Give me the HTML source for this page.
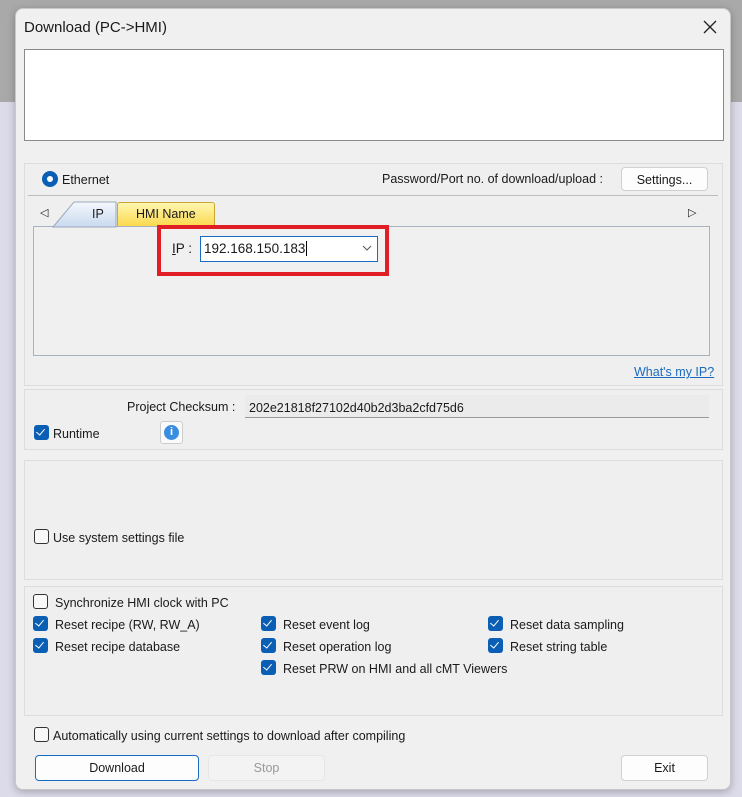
<!DOCTYPE html>
<html><head><meta charset="utf-8"><style>
*{box-sizing:border-box;margin:0;padding:0}
body{width:742px;height:797px;position:relative;overflow:hidden;font-family:"Liberation Sans",sans-serif;font-size:12.5px;color:#1a1a1a;background:#dcdbe9}
.a{position:absolute}
.top{left:0;top:0;width:742px;height:102px;background:#a9a9a9}
.dlg{left:15px;top:8px;width:716px;height:782px;background:#f0f0f0;border-radius:8px;border:1px solid #c8c8c8;box-shadow:0 2px 8px rgba(0,0,0,.25)}
.grp{border:1px solid #dcdcdc;background:#efefef}
.cb{width:15px;height:15px;border-radius:3px;background:#0a5fb4}
.cb::after{content:"";position:absolute;left:4px;top:2px;width:4px;height:7px;border:solid #fff;border-width:0 1.5px 1.5px 0;transform:rotate(40deg)}
.ub{width:15px;height:15px;border-radius:3px;border:1px solid #333;background:#f8f8f8}
.btn{background:#fdfdfd;border:1px solid #d0d0d0;border-radius:4px;text-align:center;line-height:24px}
.t{white-space:nowrap}
</style></head><body>
<div class="a top"></div>
<div class="a dlg"></div>
<div class="a t" style="left:24px;top:19px;font-size:15px">Download (PC-&gt;HMI)</div>
<svg class="a" style="left:703px;top:20px" width="14" height="14"><path d="M1 1L13 13M13 1L1 13" stroke="#222" stroke-width="1.3"/></svg>
<div class="a" style="left:24px;top:49px;width:700px;height:92px;background:#fff;border:1px solid #8a8a8a"></div>

<div class="a grp" style="left:24px;top:163px;width:699px;height:223px"></div>
<div class="a" style="left:42px;top:171px;width:16px;height:16px;border-radius:50%;background:#0a5fb4"></div>
<div class="a" style="left:47px;top:176px;width:6px;height:6px;border-radius:50%;background:#fff"></div>
<div class="a t" style="left:62px;top:173px">Ethernet</div>
<div class="a t" style="left:382px;top:172px">Password/Port no. of download/upload :</div>
<div class="a btn" style="left:621px;top:167px;width:87px;height:24px">Settings...</div>
<div class="a" style="left:28px;top:195px;width:690px;height:1px;background:#bcbcbc"></div>
<div class="a t" style="left:40px;top:206px;font-size:11px">◁</div>
<div class="a t" style="left:688px;top:206px;font-size:11px">▷</div>
<div class="a" style="left:33px;top:226px;width:677px;height:130px;border:1px solid #a8b2c0;background:#f0f0f0"></div>
<svg class="a" style="left:52px;top:201px" width="66" height="27"><defs><linearGradient id="g" x1="0" y1="0" x2="0" y2="1"><stop offset="0" stop-color="#f4f8fd"/><stop offset="1" stop-color="#c9d9ef"/></linearGradient></defs><path d="M1 26L22 1H64V26Z" fill="url(#g)" stroke="#9aa8bc"/></svg>
<div class="a t" style="left:92px;top:207px">IP</div>
<div class="a" style="left:117px;top:202px;width:98px;height:24px;background:linear-gradient(#fff6b0,#fbd94e);border:1px solid #c8a830;border-bottom:none;border-radius:3px 3px 0 0"></div>
<div class="a t" style="left:136px;top:207px">HMI Name</div>
<div class="a" style="left:157px;top:225px;width:232px;height:51px;border:4px solid #e11d25"></div>
<div class="a t" style="left:172px;top:241px;font-size:13.5px"><u>I</u>P :</div>
<div class="a" style="left:200px;top:236px;width:178px;height:26px;background:#fff;border:1px solid #1a6bc0"></div>
<div class="a t" style="left:204px;top:241px;font-size:13.5px">192.168.150.183<span style="border-left:1px solid #000;margin-left:1px"></span></div>
<svg class="a" style="left:362px;top:245px" width="10" height="6"><path d="M1 1L5 5L9 1" stroke="#555" fill="none"/></svg>
<div class="a t" style="left:634px;top:365px;color:#1a6bc0;text-decoration:underline">What's my IP?</div>

<div class="a grp" style="left:24px;top:389px;width:699px;height:61px"></div>
<div class="a t" style="left:127px;top:400px">Project Checksum :</div>
<div class="a" style="left:245px;top:395px;width:464px;height:23px;background:#ebebeb;border-bottom:1px solid #999"></div>
<div class="a t" style="left:249px;top:401px">202e21818f27102d40b2d3ba2cfd75d6</div>
<div class="a cb" style="left:34px;top:425px"></div>
<div class="a t" style="left:53px;top:427px">Runtime</div>
<div class="a" style="left:160px;top:421px;width:23px;height:23px;background:#fafafa;border:1px solid #ccc;border-radius:3px"></div>
<div class="a" style="left:164px;top:425px;width:15px;height:15px;border-radius:50%;background:#3a8ee0;color:#fff;font-weight:bold;font-size:11px;text-align:center;line-height:15px">i</div>

<div class="a grp" style="left:24px;top:460px;width:699px;height:120px"></div>
<div class="a ub" style="left:34px;top:529px"></div>
<div class="a t" style="left:53px;top:531px">Use system settings file</div>

<div class="a grp" style="left:24px;top:586px;width:699px;height:130px"></div>
<div class="a ub" style="left:33px;top:594px"></div><div class="a t" style="left:55px;top:596px">Synchronize HMI clock with PC</div>
<div class="a cb" style="left:33px;top:616px"></div><div class="a t" style="left:55px;top:618px">Reset recipe (RW, RW_A)</div>
<div class="a cb" style="left:33px;top:638px"></div><div class="a t" style="left:55px;top:640px">Reset recipe database</div>
<div class="a cb" style="left:261px;top:616px"></div><div class="a t" style="left:283px;top:618px">Reset event log</div>
<div class="a cb" style="left:261px;top:638px"></div><div class="a t" style="left:283px;top:640px">Reset operation log</div>
<div class="a cb" style="left:261px;top:660px"></div><div class="a t" style="left:283px;top:662px">Reset PRW on HMI and all cMT Viewers</div>
<div class="a cb" style="left:488px;top:616px"></div><div class="a t" style="left:510px;top:618px">Reset data sampling</div>
<div class="a cb" style="left:488px;top:638px"></div><div class="a t" style="left:510px;top:640px">Reset string table</div>

<div class="a ub" style="left:34px;top:727px"></div>
<div class="a t" style="left:53px;top:729px">Automatically using current settings to download after compiling</div>
<div class="a btn" style="left:35px;top:755px;width:164px;height:26px;border:1px solid #1a6bc0">Download</div>
<div class="a btn" style="left:208px;top:755px;width:117px;height:26px;background:#f3f3f3;border-color:#e6e6e6;color:#999">Stop</div>
<div class="a btn" style="left:621px;top:755px;width:87px;height:26px">Exit</div>
</body></html>
